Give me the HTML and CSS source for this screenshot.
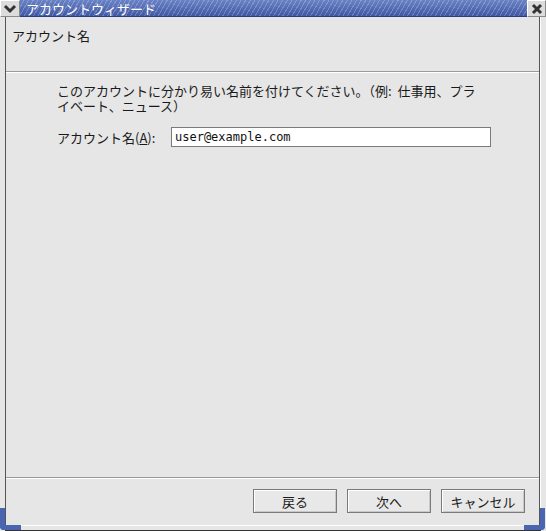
FILE: index.html
```html
<!DOCTYPE html>
<html lang="ja">
<head>
    <meta charset="UTF-8">
    <title>アカウントウィザード</title>
    <link rel="stylesheet" href="styles.css">
</head>
<body>
    <div class="window">
        <div class="titlebar">
            <div class="tb-btn menu-btn">
                <svg width="14" height="10" viewBox="0 0 14 10"><path d="M2 2 L7 7 L12 2" fill="none" stroke="#333" stroke-width="3"/></svg>
            </div>
            <div class="title">アカウントウィザード</div>
            <div class="tb-btn close-btn">
                <svg width="12" height="12" viewBox="0 0 12 12"><path d="M2 2 L10 10 M10 2 L2 10" fill="none" stroke="#333" stroke-width="3"/></svg>
            </div>
        </div>

        <div class="client">
            <div class="page-header">アカウント名</div>

            <div class="page-body">
                <p class="desc">このアカウントに分かり易い名前を付けてください。（例:&nbsp; 仕事用、プライベート、ニュース）</p>
                <div class="field">
                    <label for="acct">アカウント名(<u>A</u>):</label>
                    <input id="acct" type="text" value="user@example.com">
                </div>
            </div>

            <div class="buttons">
                <button>戻る</button>
                <button>次へ</button>
                <button>キャンセル</button>
            </div>
        </div>

        <div class="frame-bottom"></div>
        <div class="corner corner-left"></div>
        <div class="corner corner-right"></div>
    </div>
</body>
</html>
```

FILE: styles.css
```css
/* Reset */
body {
    margin: 0;
    background-color: #e6e6e6;
    font-family: "Noto Sans CJK JP", "DejaVu Sans", sans-serif;
    font-size: 13px;
    color: #1a1a1a;
}

/* Window frame */
.window {
    position: relative;
    width: 546px;
    height: 531px;
    display: flex;
    flex-direction: column;
    background-color: #e6e6e6;
    overflow: hidden;
}

/* Title bar */
.titlebar {
    display: flex;
    height: 17px;
    flex-shrink: 0;
}

.tb-btn {
    display: flex;
    align-items: center;
    justify-content: center;
    background-color: #dcdcdc;
    border: 1px solid #8a8a8a;
    border-top-color: #fff;
    border-left-color: #fff;
    box-sizing: border-box;
}

.menu-btn {
    width: 20px;
}

.close-btn {
    width: 19px;
}

.title {
    flex: 1;
    color: #fff;
    padding-left: 6px;
    line-height: 17px;
    background-color: #4d68b2;
    background-image:
        repeating-linear-gradient(-60deg, transparent 0 3px, rgba(255, 255, 255, 0.22) 3px 4px),
        linear-gradient(#6a83c6, #3f58a3);
    border-bottom: 1px solid #2c3f7a;
    box-sizing: border-box;
    white-space: nowrap;
}

/* Client area */
.client {
    flex: 1;
    display: flex;
    flex-direction: column;
    margin: 0 6px 0 5px;
    border-left: 1px solid #555;
    border-right: 1px solid #555;
    box-shadow: 1px 0 0 #fff;
}

.page-header {
    height: 55px;
    padding: 9px 0 0 6px;
    box-sizing: border-box;
    border-bottom: 1px solid #9a9a9a;
    box-shadow: 0 1px 0 #fff;
}

.page-body {
    flex: 1;
    padding: 11px 0 0 51px;
    border-bottom: 1px solid #9a9a9a;
}

.desc {
    margin: 0;
    width: 424px;
    line-height: 15px;
}

.field {
    display: flex;
    align-items: center;
    margin-top: 14px;
}

.field label {
    width: 114px;
}

.field input {
    width: 320px;
    height: 20px;
    box-sizing: border-box;
    border: 1px solid #7a7a7a;
    background-color: #fff;
    font-family: "DejaVu Sans Mono", monospace;
    font-size: 12px;
    padding: 0 3px;
    color: #111;
}

/* Buttons */
.buttons {
    display: flex;
    justify-content: flex-end;
    gap: 10px;
    padding: 10px 14px 12px 0;
    border-top: 1px solid #fff;
}

.buttons button {
    width: 84px;
    height: 24px;
    font-family: inherit;
    font-size: 13px;
    color: #1a1a1a;
    background-color: #e8e8e8;
    border: 1px solid #7a7a7a;
    box-shadow: inset 1px 1px 0 #fff, inset -1px -1px 0 #c8c8c8;
}

/* Bottom frame */
.frame-bottom {
    height: 6px;
    flex-shrink: 0;
    margin: 0 5px 0 5px;
    border-top: 1px solid #fff;
    border-bottom: 1px solid #333;
    box-sizing: border-box;
}

.corner {
    position: absolute;
    bottom: 1px;
    width: 21px;
    height: 22px;
    border-bottom: 5px solid #4a66b0;
    box-sizing: border-box;
}

.corner-left {
    left: 0;
    border-left: 5px solid #4a66b0;
    border-bottom-left-radius: 4px;
}

.corner-right {
    right: 1px;
    border-right: 5px solid #4a66b0;
    border-bottom-right-radius: 4px;
}
```
